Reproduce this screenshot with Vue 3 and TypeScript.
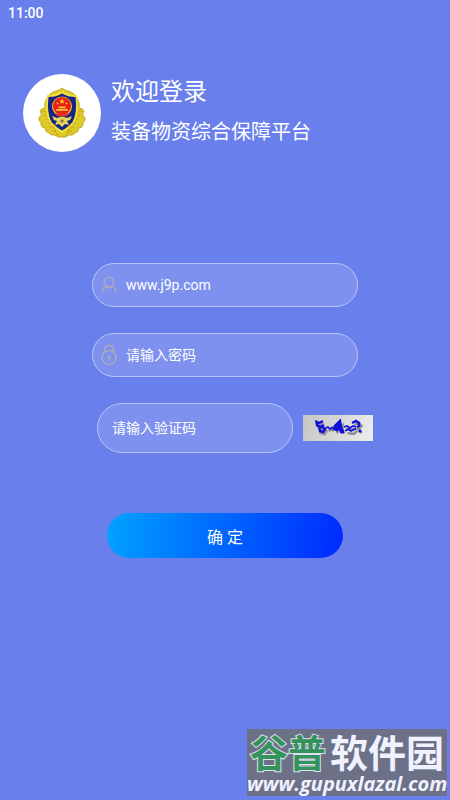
<script setup lang="ts">
import { ref } from 'vue'

const account = ref('www.j9p.com')
const password = ref('')
const code = ref('')

const leaves = [0, 1, 2, 3, 4, 5]
</script>

<template>
  <div class="screen">
    <div class="status">11:00</div>

    <header class="header">
      <div class="avatar">
        <svg class="emblem" viewBox="0 0 48 52" aria-hidden="true">
          <path
            d="M24 1 Q27 4 32 4.500 Q38 7 40 13 Q42 17 41 21 Q45 21 46 24 Q44 27 45 29 Q48 30 47 33 Q44 36 45 38 Q44 41 41 41 Q41 45 37 46 Q35 49 31 48 Q28 51 24 50 Q20 51 17 48 Q13 49 11 46 Q7 45 7 41 Q4 41 3 38 Q4 36 1 33 Q0 30 3 29 Q4 27 2 24 Q3 21 7 21 Q6 17 8 13 Q10 7 16 4.500 Q21 4 24 1 Z"
            fill="#dfc928" stroke="#b9a01c" stroke-width="0.8"
          />
          <g v-for="i in leaves" :key="i" fill="none" stroke="#b89f20" stroke-width="0.8">
            <path :d="`M${4 + i * 2} ${24 + i * 4} q5 0 6 5`" />
            <path :d="`M${44 - i * 2} ${24 + i * 4} q-5 0 -6 5`" />
          </g>
          <path d="M24 4 Q17 8 9 8 Q6 27 12 36 Q18 43 24 46 Q30 43 36 36 Q42 27 39 8 Q31 8 24 4 Z" fill="#f0df3c" />
          <path d="M24 6.500 Q18 10 10.500 10 Q8.500 26 13.500 35 Q19 41 24 43.500 Q29 41 34.500 35 Q39.500 26 37.500 10 Q30 10 24 6.500 Z" fill="#152487" />
          <circle cx="24" cy="19.500" r="10" fill="#efc727" />
          <circle cx="24" cy="19" r="9" fill="#ea2018" />
          <path d="M24 11.500 l0.800 2 h2 l-1.600 1.300 l0.700 2 l-1.900 -1.200 l-1.900 1.200 l0.700 -2 l-1.600 -1.300 h2z" fill="#ffd62d" />
          <path d="M18 22 h12 v1.800 h-12z M20.500 19.500 h7 v1.800 h-7z" fill="#ffc52d" />
          <circle cx="19.500" cy="16.500" r="0.900" fill="#ffd62d" />
          <circle cx="28.500" cy="16.500" r="0.900" fill="#ffd62d" />
          <path d="M17 26.500 h14 l-2 2.700 h-10z" fill="#e33120" />
          <path d="M14 29 l5 2 l3 -1 h4 l3 1 l5 -2 l-2 4 l-3 1 l2 4 l-4 -1 l-3 3 l-3 -3 l-4 1 l2 -4 l-3 -1z" fill="#e8d55a" />
          <circle cx="24" cy="34" r="1.800" fill="#8b8238" />
        </svg>
      </div>
      <div class="titles">
        <h1>欢迎登录</h1>
        <p>装备物资综合保障平台</p>
      </div>
    </header>

    <form class="form" @submit.prevent>
      <label class="field">
        <svg class="icon" viewBox="0 0 18 18" aria-hidden="true">
          <circle cx="9" cy="6" r="4.700" />
          <path d="M1.800 17 Q2 12 6 10.500 M12 10.500 Q16 12 16.200 17 M5 9.500 Q9 14.500 13 9.500" />
        </svg>
        <input v-model="account" type="text" aria-label="账号" />
      </label>

      <label class="field">
        <svg class="icon lock" viewBox="0 0 18 22" aria-hidden="true">
          <circle cx="9" cy="13.500" r="7" />
          <path d="M4.500 8 V6 Q4.500 1.500 9 1.500 Q13.500 1.500 13.500 6 V8" />
          <path d="M9 13 V17" />
          <circle class="dot" cx="9" cy="13" r="0.800" />
        </svg>
        <input v-model="password" type="password" placeholder="请输入密码" aria-label="密码" />
      </label>

      <div class="code-row">
        <label class="field code">
          <input v-model="code" type="text" placeholder="请输入验证码" aria-label="验证码" />
        </label>
        <button class="captcha" type="button" aria-label="刷新验证码">
          <svg viewBox="0 0 70 26" aria-hidden="true">
            <g class="shade" transform="translate(1.500 2)">
              <path d="M19 6 L13 9 L16 12 L21 10 M16 12 L16 16 L20 17 L22 14 L19 12 M24 14 L27 12 L29 14 M37 7 L32 12 L33 15 L38 9 L38 17 M42 12 L49 13 L53 11 M43 16 L49 17 L53 14 M50 8 L54 6 L57 9 L54 12 L57 16" />
            </g>
            <g class="ink">
              <path d="M20 6 L16 8 L13.500 7 L14 10 L17 12 L21 10 M16 11 L17 16 L20 17 L22 14 L19 12" />
              <path class="thin" d="M23 13 L25 12 L27 14 L30 12" />
              <path class="fill" d="M37 6 L32 11 L31 14 L34 15 L37 12 L38 17 L40 17 L38 12 Z" />
              <path class="thin" d="M41 12 L44 11 L47 13 L50 11 L53 12 M42 16 L45 14 L48 16 L51 14 L53 14" />
              <path d="M49 8 L53 6 L56 8 L56 11 L54 12 M56 15 L58 17" />
            </g>
          </svg>
        </button>
      </div>

      <button class="submit" type="submit">确 定</button>
    </form>

    <aside class="watermark">
      <div class="brand"><span>谷普</span>软件园</div>
      <div class="site">www.gupuxlazal.com</div>
    </aside>
  </div>
</template>

<style>
body {
  background: #6980ec;
}
</style>

<style scoped>
.screen {
  position: relative;
  box-sizing: border-box;
  min-height: 100vh;
  overflow: hidden;
  color: #fff;
  background: #6980ec;
  font-family: Roboto, "Noto Sans CJK SC", sans-serif;
}

.status {
  padding: 4px 8px 0;
  font-size: 14px;
  line-height: 18px;
  font-weight: 500;
}

.header {
  display: flex;
  gap: 10px;
  padding: 52px 23px 0;
}

.avatar {
  display: flex;
  flex: none;
  align-items: center;
  justify-content: center;
  width: 78px;
  height: 78px;
  border-radius: 50%;
  background: #fff;
}

.emblem {
  width: 48px;
  height: 52px;
}

h1,
p {
  margin: 0;
  font-weight: 400;
}

h1 {
  font-size: 24px;
  line-height: 36px;
}

p {
  margin-top: 7px;
  font-size: 20px;
  line-height: 30px;
}

.form {
  display: flex;
  flex-direction: column;
  gap: 26px;
  padding: 111px 92px 0;
}

.field {
  display: flex;
  align-items: center;
  box-sizing: border-box;
  height: 44px;
  padding: 0 16px 0 7px;
  gap: 8px;
  border: 1px solid #b9c4f6;
  border-radius: 22px;
  background: #7e91ee;
}

.icon {
  flex: none;
  width: 18px;
  height: 18px;
  fill: none;
  stroke: #aaa9b9;
  stroke-width: 1.5;
}

.lock {
  height: 22px;
}

.dot {
  fill: #aaa9b9;
}

input {
  flex: 1;
  min-width: 0;
  padding: 0;
  border: 0;
  outline: 0;
  color: #fff;
  background: transparent;
  font: inherit;
  font-size: 14px;
  line-height: 20px;
}

input::placeholder {
  color: #fff;
  opacity: 1;
}

.code-row {
  display: flex;
  align-items: center;
  gap: 10px;
  margin: 0 -15px 0 5px;
}

.code {
  flex: 1;
  min-width: 0;
  height: 50px;
  padding: 0 14px;
  border-radius: 25px;
}

.captcha {
  flex: none;
  width: 70px;
  height: 26px;
  padding: 0;
  border: 0;
  background: linear-gradient(110deg, #c5c5c5, #ededed);
}

.captcha svg {
  display: block;
  width: 100%;
  height: 100%;
  fill: none;
  stroke-width: 2.5;
}

.shade {
  stroke: #8e8e94;
}

.ink {
  stroke: #1010d6;
}

.ink .thin {
  stroke-width: 1.6;
}

.ink .fill {
  fill: #1010d6;
}

.submit {
  height: 45px;
  margin: 34px 15px 0;
  padding: 0;
  border: 0;
  border-radius: 23px;
  color: #fff;
  background: linear-gradient(100deg, #00a2ff, #0029ff);
  font: inherit;
  font-size: 16px;
}

.watermark {
  position: absolute;
  right: 3px;
  bottom: 4px;
  box-sizing: border-box;
  width: 200px;
  height: 67px;
  padding-top: 5px;
  color: #f0f2ff;
  background: #6d7187;
  text-align: center;
  white-space: nowrap;
}

.brand {
  display: flex;
  justify-content: center;
  gap: 4px;
  font-size: 38px;
  line-height: 40px;
  font-weight: 700;
}

.brand span {
  color: #36925c;
  -webkit-text-stroke: 2px #d9e2ee;
  paint-order: stroke fill;
}

.site {
  font-family: "Open Sans", sans-serif;
  font-size: 20px;
  line-height: 20px;
  font-style: italic;
  font-weight: 700;
}
</style>
